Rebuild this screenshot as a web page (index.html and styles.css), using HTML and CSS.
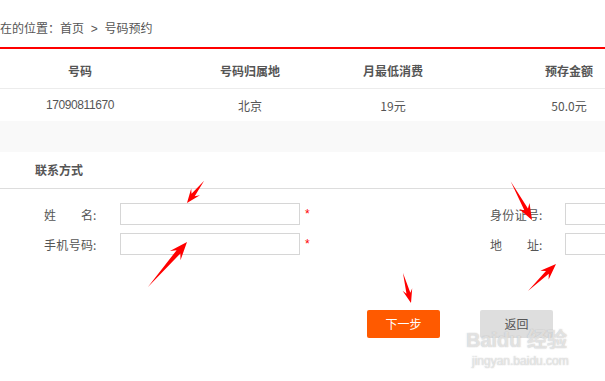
FILE: index.html
```html
<!DOCTYPE html>
<html lang="zh-CN">
<head>
<meta charset="utf-8">
<title>号码预约</title>
<link rel="stylesheet" href="styles.css">
</head>
<body>
<div class="page">
  <div class="crumb">在的位置：首页 <span class="sep">&gt;</span> 号码预约</div>
  <div class="table">
    <div class="row head">
      <div>号码</div><div>号码归属地</div><div>月最低消费</div><div>预存金额</div>
    </div>
    <div class="row body">
      <div class="num">17090811670</div><div>北京</div><div>19元</div><div>50.0元</div>
    </div>
  </div>
  <div class="band"></div>
  <div class="section-title">联系方式</div>
  <div class="form">
    <div class="field left">
      <label class="lbl"><span class="jt">姓名</span>:</label>
      <div class="input"></div><span class="star">*</span>
    </div>
    <div class="field right">
      <label class="lbl"><span class="jt">身份证号</span>:</label>
      <div class="input"></div>
    </div>
    <div class="field left">
      <label class="lbl"><span class="jt">手机号码</span>:</label>
      <div class="input"></div><span class="star">*</span>
    </div>
    <div class="field right">
      <label class="lbl"><span class="jt">地址</span>:</label>
      <div class="input"></div>
    </div>
  </div>
  <div class="buttons">
    <div class="btn primary">下一步</div>
    <div class="btn gray">返回</div>
  </div>
</div>

<div class="watermark">
  <div class="wm-big">Baidu 经验</div>
  <div class="wm-small">jingyan.baidu.com</div>
</div>

<svg class="arrows" width="605" height="381" viewBox="0 0 605 381">
  <g fill="#ff0000">
    <polygon transform="translate(187 203) rotate(127.7)" points="0,0 -14,-5.5 -10,-2 -28,0 -10,2 -14,5.5"/>
    <polygon transform="translate(187 242) rotate(-49.1)" points="0,0 -18,-7 -13,-2.5 -60,0 -13,2.5 -18,7"/>
    <polygon transform="translate(532 220) rotate(61.1)" points="0,0 -16,-6 -12,-2 -44,0 -12,2 -16,6"/>
    <polygon transform="translate(556 264) rotate(-44)" points="0,0 -16,-6 -12,-2 -39,0 -12,2 -16,6"/>
    <polygon transform="translate(411 303) rotate(75)" points="0,0 -14,-5 -10,-2 -31,0 -10,2 -14,5"/>
  </g>
</svg>
</body>
</html>
```

FILE: styles.css
```css
html, body {
  margin: 0;
  padding: 0;
  background: #fff;
  overflow: hidden;
}
body {
  width: 605px;
  height: 381px;
  position: relative;
  font-family: "Noto Sans CJK SC", "Liberation Sans", sans-serif;
  font-size: 12px;
  color: #555;
}
.page {
  width: 605px;
  overflow: hidden;
}
.crumb {
  height: 27px;
  padding-top: 20px;
  line-height: 16px;
  border-bottom: 2px solid #ff0000;
  color: #555;
}
.crumb .sep {
  margin: 0 4px;
  font-family: "Liberation Sans", sans-serif;
}
.table {
  width: 692px;
}
.row {
  display: grid;
  grid-template-columns: 160px 180px 106px 246px;
  align-items: center;
  text-align: center;
}
.row.head {
  height: 40px;
  padding-top: 4px;
  box-sizing: border-box;
  font-weight: bold;
  border-bottom: 1px solid #ececec;
}
.row.body {
  height: 32px;
}
.num {
  font-family: "Liberation Sans", sans-serif;
  letter-spacing: -0.4px;
}
.band {
  height: 31px;
  background: #f9f9f9;
}
.section-title {
  height: 36px;
  line-height: 36px;
  padding-left: 35px;
  font-weight: bold;
  border-bottom: 1px solid #dddddd;
}
.form {
  display: grid;
  grid-template-columns: 446px 1fr;
  row-gap: 8px;
  padding: 14px 0 0 44px;
}
.field {
  display: flex;
  align-items: center;
  height: 22px;
}
.lbl {
  display: flex;
  align-items: center;
  width: 76px;
  flex: none;
}
.right .lbl {
  width: 75px;
}
.jt {
  display: inline-block;
  width: 49px;
  text-align: justify;
  text-align-last: justify;
}
.input {
  width: 180px;
  height: 22px;
  box-sizing: border-box;
  border: 1px solid #d6d6d6;
  background: #fff;
  flex: none;
}
.star {
  color: #ff0000;
  margin-left: 5px;
  font-family: "Liberation Sans", sans-serif;
}
.buttons {
  display: flex;
  gap: 40px;
  padding-left: 367px;
  margin-top: 55px;
}
.btn {
  width: 73px;
  height: 28px;
  line-height: 28px;
  text-align: center;
  border-radius: 2px;
}
.btn.primary {
  background: #ff5a00;
  color: #fff;
}
.btn.gray {
  background: #dedede;
  color: #555;
}
.watermark {
  position: absolute;
  left: 466px;
  top: 330px;
  color: rgba(255, 255, 255, 0.55);
  font-family: "Liberation Sans", "Noto Sans CJK SC", sans-serif;
  text-shadow: 0 0 1px rgba(170, 170, 170, 0.5), 0 0 1px rgba(170, 170, 170, 0.5);
  line-height: 1;
}
.wm-big {
  font-size: 20px;
  font-weight: bold;
}
.wm-small {
  font-size: 12px;
  margin-top: 5px;
  margin-left: 6px;
}
.arrows {
  position: absolute;
  left: 0;
  top: 0;
  pointer-events: none;
}
```
